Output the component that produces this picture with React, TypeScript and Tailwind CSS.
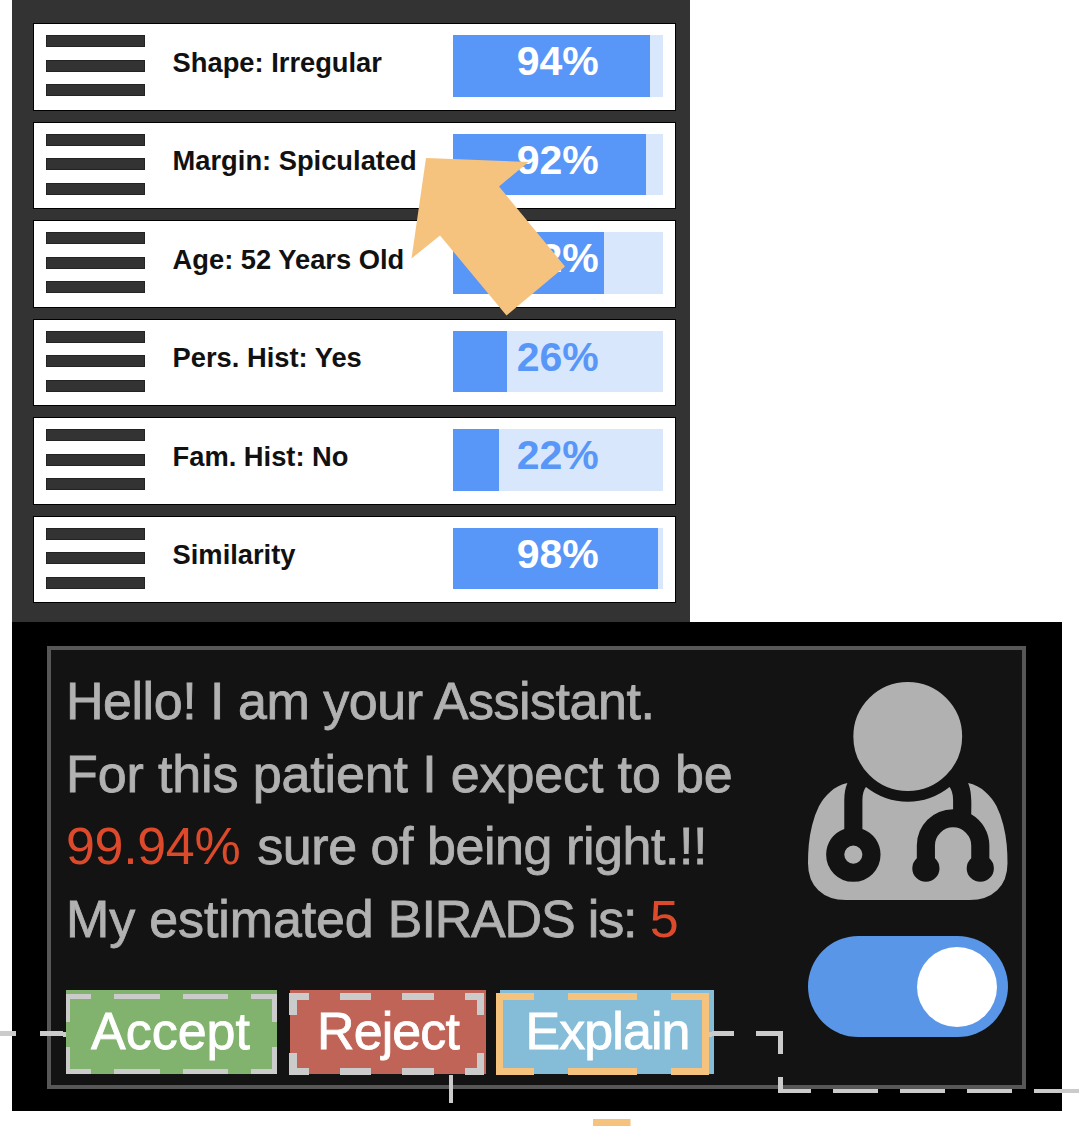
type Row = { label: string; value: number };

const rows: Row[] = [
  { label: "Shape: Irregular", value: 94 },
  { label: "Margin: Spiculated", value: 92 },
  { label: "Age: 52 Years Old", value: 72 },
  { label: "Pers. Hist: Yes", value: 26 },
  { label: "Fam. Hist: No", value: 22 },
  { label: "Similarity", value: 98 },
];

function FeatureRow({ label, value }: Row) {
  return (
    <div className="flex h-[87.5px] items-start border border-black bg-white pl-[12.4px] pr-[12px] pt-[11.3px]">
      <div className="flex w-[98.2px] shrink-0 flex-col gap-[12.6px]">
        <span className="h-[12px] border border-black/30 bg-[#333333]" />
        <span className="h-[12px] border border-black/30 bg-[#333333]" />
        <span className="h-[12px] border border-black/30 bg-[#333333]" />
      </div>
      <div className="ml-[28px] w-[280.4px] shrink-0 whitespace-nowrap pt-[11.5px] text-[27.3px] leading-[32px] font-bold text-[#111111]">
        {label}
      </div>
      <div className="relative h-[61.5px] flex-1 bg-[#d9e7fd]">
        <div className="h-full bg-[#5897f8]" style={{ width: `${value}%` }} />
        <span
          className={`absolute inset-0 pt-px text-center text-[41px] leading-[50px] font-bold ${
            value > 50 ? "text-white" : "text-[#5897f8]"
          }`}
        >
          {value}%
        </span>
      </div>
    </div>
  );
}

function DoctorIcon() {
  return (
    <svg viewBox="0 0 1408 1536" preserveAspectRatio="none" className="h-[218px] w-[199.5px]" fill="#b1b1b1">
      <path d="M384 1216q0 26-19 45t-45 19-45-19-19-45 19-45 45-19 45 19 19 45zM1408 1277q0 121-73 190t-194 69h-874q-121 0-194-69t-73-190q0-68 5.5-131t24-138 47.5-132.5 81-103 120-60.5q-22 52-22 120v203q-58 20-93 70t-35 111q0 80 56 136t136 56 136-56 56-136q0-61-35.5-111t-92.5-70v-203q0-62 25-93 132 104 295 104t295-104q25 31 25 93v64q-106 0-181 75t-75 181v89q-32 29-32 71 0 40 28 68t68 28 68-28 28-68q0-42-32-71v-89q0-52 38-90t90-38 90 38 38 90v89q-32 29-32 71 0 40 28 68t68 28 68-28 28-68q0-42-32-71v-89q0-68-34.5-127.5t-93.5-93.5q0-10 .5-42.5t0-48-2.5-41.5-7-47-13-40q68 15 120 60.5t81 103 47.5 132.5 24 138 5.5 131zM1088 384q0 159-112.5 271.5t-271.5 112.5-271.5-112.5-112.5-271.5 112.5-271.5 271.5-112.5 271.5 112.5 112.5 271.5z" />
    </svg>
  );
}

/* Arrow, dashed highlights and connector lines drawn over both panels */
function Annotations() {
  return (
    <svg className="pointer-events-none absolute inset-0" width="1079" height="1126" viewBox="0 0 1079 1126">
      <path fill="#f6c37f" d="M426 158L528.5 162L499 186.5L565 266.5L506.5 315.5L440 235.5L411.5 258.5Z" />
      <g fill="#cbcbcb">
        <path d="M66 994h25v5H70v23h-4zM114 994h46v5h-46zM183 994h45v5h-45zM251 994h26v28h-5v-23h-21z" />
        <path d="M66 1047h4v22h21v5H66zM114 1069h46v5h-46zM183 1069h45v5h-45zM272 1047h5v27h-26v-5h21z" />
        <path d="M289 993h20v7h-12v15h-8zM340 993h31v7h-31zM402 993h32v7h-32zM465 993h19v22h-7v-15h-12z" />
        <path d="M289 1053h8v15h12v7h-20zM340 1068h31v7h-31zM402 1068h32v7h-32zM477 1053h7v22h-19v-7h12z" />
        <path d="M0 1031h16v5H0zM40 1031h23v1h3v5h-3v-1H40zM449 1075h4v28h-4z" />
        <path d="M709 1032h3v-1h22v5h-22v1h-3zM756 1031h27v23h-5v-18h-22zM778 1077h5v12h28v4h-33zM833 1089h45v4h-45zM900 1089h45v4h-45zM967 1089h45v4h-45zM1034 1089h45v4h-45z" />
      </g>
      <g fill="#f6c37f">
        <path d="M496 993h38v7h-31v68h31v7h-38zM568 993h69v7h-69zM671 993h38v82h-38v-7h31v-68h-31zM568 1068h69v7h-69zM593 1119h37.500v7h-37.500z" />
      </g>
    </svg>
  );
}

export default function App() {
  return (
    <main className="relative h-[1126px] w-[1079px] overflow-hidden bg-white pl-[12px] font-['Liberation_Sans',Arial,sans-serif]">
      <section className="flex h-[622px] w-[678px] flex-col gap-[11px] bg-[#333333] pl-[21px] pr-[14.500px] pt-[23px]">
        {rows.map((row) => (
          <FeatureRow key={row.label} {...row} />
        ))}
      </section>

      <section className="h-[489px] w-[1050px] bg-black pl-[35px] pt-[24px]">
        <div className="flex h-[442.500px] w-[978.500px] justify-between border-4 border-[#575757] bg-[#131313] pl-[15px] pr-[14px]">
          <div>
            <div className="whitespace-nowrap pt-[15px] text-[52px] leading-[72.500px] text-[#b1b1b1] [-webkit-text-stroke:0.8px_#b1b1b1]">
              <p className="tracking-[-0.470px]">Hello! I am your Assistant.</p>
              <p className="tracking-[-0.130px]">For this patient I expect to be</p>
              <p className="tracking-[-0.450px]">
                <span className="mr-[3px] tracking-[-0.350px] text-[#dc4a2b] [-webkit-text-stroke:0px]">99.94%</span> sure of being
                right.!!
              </p>
              <p className="tracking-[-1.150px]">
                <span className="tracking-[-0.140px]">My estimated </span>BIRADS is:{" "}
                <span className="text-[#dc4a2b] [-webkit-text-stroke:0px]">5</span>
              </p>
            </div>
            <div className="mt-[35.300px] flex text-[52px] leading-[80px] text-white [-webkit-text-stroke:0.8px_white]">
              <button className="h-[84px] w-[211px] bg-[#82b36e] pb-[2px] pr-[2px]">Accept</button>
              <button className="ml-[13px] h-[84px] w-[196px] bg-[#bf6456] pb-[2px] tracking-[-0.900px]">Reject</button>
              <button className="ml-[14px] h-[84px] w-[214px] bg-[#85bcd8] pb-[2px] pl-px tracking-[-0.900px]">Explain</button>
            </div>
          </div>
          <div className="flex flex-col pt-[32.300px]">
            <DoctorIcon />
            <div className="mt-[35.700px] flex h-[101.500px] w-[199.500px] items-center justify-end rounded-full bg-[#5996e7] pr-[11px]">
              <div className="size-[80px] rounded-full bg-white" />
            </div>
          </div>
        </div>
      </section>

      <Annotations />
    </main>
  );
}
